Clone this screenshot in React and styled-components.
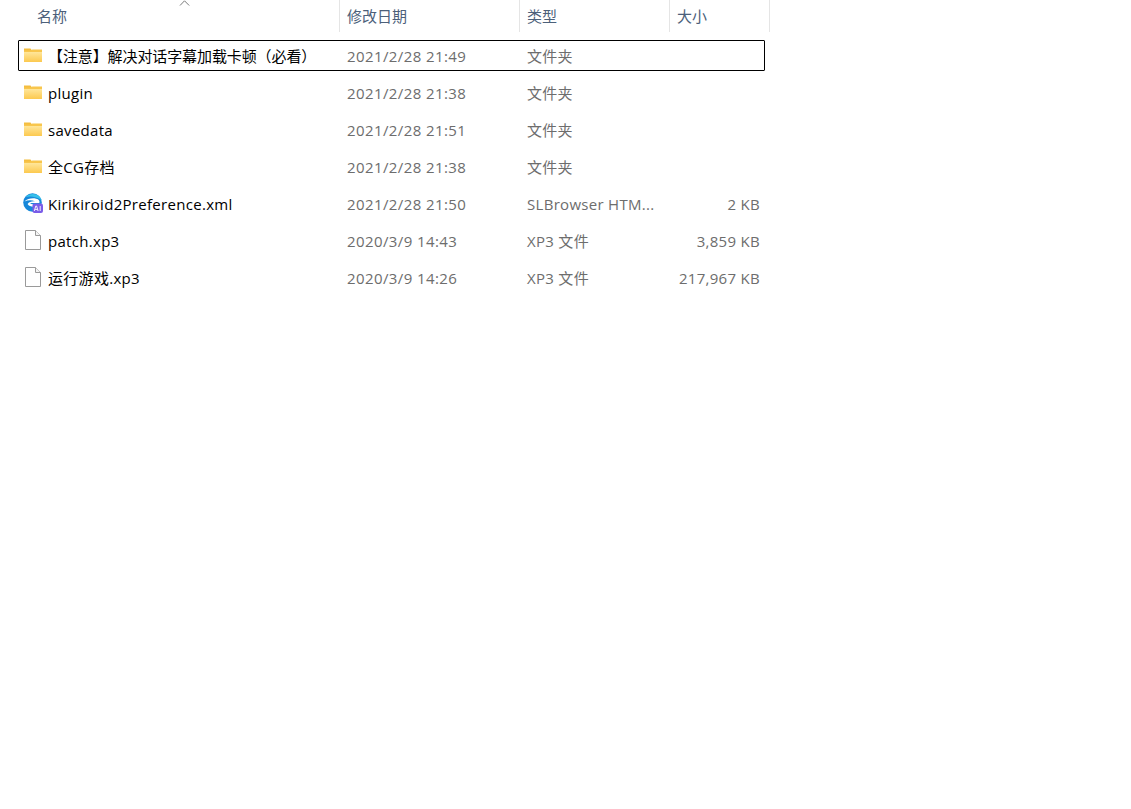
import React from "react";
import styled, { createGlobalStyle } from "styled-components";

const files = [
  { name: "【注意】解决对话字幕加载卡顿（必看）", date: "2021/2/28 21:49", type: "文件夹", size: "", icon: "folder", focused: true },
  { name: "plugin", date: "2021/2/28 21:38", type: "文件夹", size: "", icon: "folder" },
  { name: "savedata", date: "2021/2/28 21:51", type: "文件夹", size: "", icon: "folder" },
  { name: "全CG存档", date: "2021/2/28 21:38", type: "文件夹", size: "", icon: "folder" },
  { name: "Kirikiroid2Preference.xml", date: "2021/2/28 21:50", type: "SLBrowser HTM...", size: "2 KB", icon: "browser" },
  { name: "patch.xp3", date: "2020/3/9 14:43", type: "XP3 文件", size: "3,859 KB", icon: "file" },
  { name: "运行游戏.xp3", date: "2020/3/9 14:26", type: "XP3 文件", size: "217,967 KB", icon: "file" },
];

const FolderIcon = () => (
  <svg width="20" height="16" viewBox="0 0 20 16">
    <defs>
      <linearGradient id="folderFill" x1="0" y1="0" x2="0" y2="1">
        <stop offset="0" stopColor="#ffe69a" />
        <stop offset="1" stopColor="#fcc94f" />
      </linearGradient>
    </defs>
    <path d="M1 1.500h6.500l2 2.500H1z" fill="#f4bd3f" />
    <path d="M1 3.500h6.800l1.600-1H19v12.400H1z" fill="#f8c64d" />
    <path d="M1 5h18v10H1z" fill="url(#folderFill)" />
  </svg>
);

const FileIcon = () => (
  <svg width="20" height="20" viewBox="0 0 20 20">
    <path d="M2.500.500h10l5 5v14h-15z" fill="#fff" stroke="#9a9a9a" />
    <path d="M12.500.500v5h5" fill="#f4f4f4" stroke="#9a9a9a" />
  </svg>
);

const BrowserIcon = () => (
  <svg width="20" height="20" viewBox="0 0 20 20">
    <circle cx="9.500" cy="9.500" r="9.300" fill="#1687d9" />
    <path d="M2.500 4C6 .200 13 0 16.500 3.500c1 1 1.800 2.300 2.200 3.700C13.500 3.500 7 2.800 2.500 4z" fill="#37c0ea" />
    <path d="M1.500 8.500C5 5 12 4.200 15.500 6.800c1 .8 1.200 2 .8 3.200H7c1 1.300 3.500 1.800 6 1l-.2 2.500c-3.500.8-7-.3-8.200-2.500C6 9 8.500 8 12 8.300 8 6.800 4.500 7.300 1.500 8.500z" fill="#fff" />
    <rect x="9.500" y="10.500" width="10.500" height="9.500" rx="2" fill="#7a5ce8" />
    <path d="M11.300 18l1.500-5h.8l1.500 5M12.100 16.400h2.300M17.200 13v5" fill="none" stroke="#fff" strokeWidth=".9" />
  </svg>
);

const icons = { folder: FolderIcon, file: FileIcon, browser: BrowserIcon };

const App = () => (
  <Window>
    <GlobalStyle />
    <HeaderBar>
      <NameHeader>
        <SortArrow width="12" height="6" viewBox="0 0 12 6">
          <path d="M1 5.500L5.500.800l4.700 4.700" fill="none" stroke="#7a7a7a" />
        </SortArrow>
        名称
      </NameHeader>
      <HeaderCell $width={180}>修改日期</HeaderCell>
      <HeaderCell $width={150}>类型</HeaderCell>
      <HeaderCell $width={100}>大小</HeaderCell>
    </HeaderBar>
    <List>
      {files.map((file) => {
        const Icon = icons[file.icon];
        return (
          <Row key={file.name} $focused={file.focused}>
            <NameCell>
              <IconSlot>
                <Icon />
              </IconSlot>
              <FileName $tight={file.focused}>{file.name}</FileName>
            </NameCell>
            <DateCell>{file.date}</DateCell>
            <TypeCell>{file.type}</TypeCell>
            <SizeCell>{file.size}</SizeCell>
          </Row>
        );
      })}
    </List>
  </Window>
);

export default App;

const GlobalStyle = createGlobalStyle`
  html, body {
    margin: 0;
    background: #fff;
  }
  body {
    font-family: "Open Sans", "Noto Sans CJK SC", sans-serif;
    font-size: 15px;
  }
`;

const Window = styled.div`
  width: 1131px;
  height: 809px;
  overflow: hidden;
`;

const HeaderBar = styled.div`
  display: flex;
  height: 32px;
  margin-bottom: 8px;
  color: #4c607a;
`;

const HeaderCell = styled.div`
  display: flex;
  align-items: center;
  box-sizing: border-box;
  width: ${(p) => p.$width}px;
  padding: 0 0 2px 7px;
  border-right: 1px solid #e5e5e5;
`;

const NameHeader = styled(HeaderCell)`
  position: relative;
  width: 340px;
  padding-left: 37px;
`;

const SortArrow = styled.svg`
  position: absolute;
  top: 0;
  left: 179px;
`;

const List = styled.div`
  display: flex;
  flex-direction: column;
  gap: 6px;
  width: 747px;
  margin-left: 18px;
`;

const Row = styled.div`
  display: flex;
  align-items: center;
  box-sizing: border-box;
  height: 31px;
  border: 1px solid ${(p) => (p.$focused ? "#000" : "transparent")};
  border-radius: 1px;
  color: #6d6d6d;
  letter-spacing: 0.3px;
`;

const NameCell = styled.div`
  display: flex;
  align-items: center;
  width: 321px;
  flex-shrink: 0;
`;

const IconSlot = styled.div`
  display: flex;
  align-items: center;
  justify-content: center;
  width: 20px;
  height: 20px;
  margin: -1px 5px 0 4px;
`;

const FileName = styled.span`
  color: #000;
  white-space: nowrap;
  letter-spacing: ${(p) => (p.$tight ? "-0.1px" : "0.3px")};
`;

const DateCell = styled.div`
  width: 180px;
  padding-left: 7px;
  box-sizing: border-box;
  letter-spacing: 0.4px;
`;

const TypeCell = styled.div`
  width: 150px;
  padding-left: 7px;
  box-sizing: border-box;
  white-space: nowrap;
`;

const SizeCell = styled.div`
  width: 90px;
  text-align: right;
  white-space: nowrap;
`;
